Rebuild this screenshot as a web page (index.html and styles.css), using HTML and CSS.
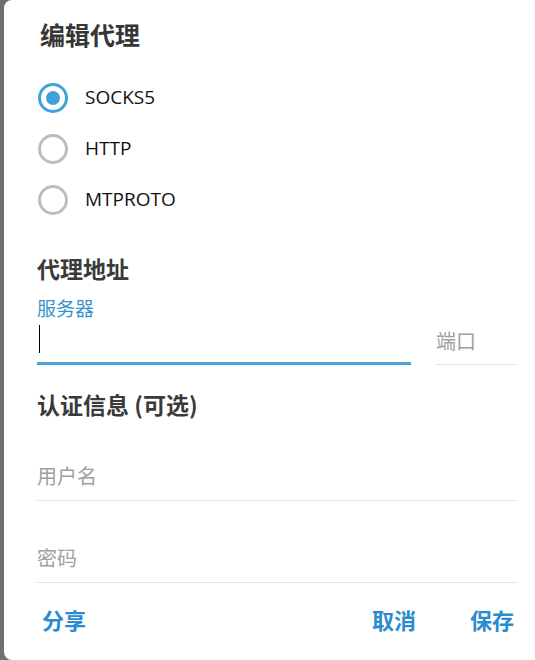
FILE: index.html
```html
<!DOCTYPE html>
<html lang="zh-CN">
<head>
<meta charset="utf-8">
<title>编辑代理</title>
<link rel="stylesheet" href="styles.css">
</head>
<body>
<div class="dialog">
  <h1 class="title">编辑代理</h1>
  <div class="radios">
    <label class="radio-row"><span class="radio checked"></span><span class="radio-text">SOCKS5</span></label>
    <label class="radio-row"><span class="radio"></span><span class="radio-text">HTTP</span></label>
    <label class="radio-row"><span class="radio"></span><span class="radio-text">MTPROTO</span></label>
  </div>
  <h2 class="section section-address">代理地址</h2>
  <div class="address-row">
    <div class="server-col">
      <div class="float-label">服务器</div>
      <div class="server-input"><span class="caret"></span></div>
    </div>
    <div class="port-input">端口</div>
  </div>
  <h2 class="section section-auth">认证信息 (可选)</h2>
  <div class="field field-user">用户名</div>
  <div class="field field-pass">密码</div>
  <div class="actions">
    <span class="btn btn-share">分享</span>
    <span class="spacer"></span>
    <span class="btn btn-cancel">取消</span>
    <span class="btn btn-save">保存</span>
  </div>
</div>
</body>
</html>
```
FILE: styles.css
```css
html, body {
  margin: 0;
  padding: 0;
  height: 660px;
  overflow: hidden;
  background: #6f6f6f;
}

body {
  font-family: "Open Sans", "Noto Sans CJK SC", sans-serif;
}

.dialog {
  margin-left: 4px;
  height: 660px;
  box-sizing: border-box;
  background: #ffffff;
  border-radius: 8px 0 0 8px;
  padding: 0 18px 0 33px;
  display: flex;
  flex-direction: column;
}

.title {
  margin: 18px 0 0 3px;
  font-family: "Noto Sans CJK SC", sans-serif;
  font-size: 25px;
  line-height: 32px;
  font-weight: 700;
  color: #363636;
}

.radios {
  margin-top: 22px;
  display: flex;
  flex-direction: column;
}

.radio-row {
  height: 51px;
  display: flex;
  align-items: center;
}

.radio {
  width: 30px;
  height: 30px;
  box-sizing: border-box;
  border: 3px solid #bdbdbd;
  border-radius: 50%;
  margin-left: 1px;
  display: flex;
  align-items: center;
  justify-content: center;
}

.radio.checked {
  border-color: #40a2dd;
}

.radio.checked::after {
  content: "";
  width: 14px;
  height: 14px;
  border-radius: 50%;
  background: #40a2dd;
}

.radio-text {
  margin-left: 17px;
  font-size: 19px;
  line-height: 24px;
  margin-top: -2px;
  color: #111;
}

.section {
  margin: 0;
  font-family: "Noto Sans CJK SC", sans-serif;
  font-size: 23px;
  line-height: 28px;
  font-weight: 700;
  color: #3a3a3a;
}

.section-address {
  margin-top: 29px;
}

.section-auth {
  margin-top: 25px;
}

.address-row {
  margin-top: 13px;
  display: flex;
  align-items: flex-end;
  gap: 25px;
}

.server-col {
  width: 374px;
  display: flex;
  flex-direction: column;
}

.float-label {
  font-family: "Noto Sans CJK SC", sans-serif;
  font-size: 19px;
  line-height: 25px;
  color: #3893cc;
}

.server-input {
  height: 45px;
  box-sizing: border-box;
  border-bottom: 3px solid #47a4d6;
  padding: 5px 0 0 2px;
}

.caret {
  display: block;
  width: 1px;
  height: 28px;
  background: #000;
}

.port-input {
  flex: 1;
  height: 45px;
  box-sizing: border-box;
  border-bottom: 1px solid #e2e2e2;
  padding: 2px 0 5px 0;
  display: flex;
  align-items: center;
  font-family: "Noto Sans CJK SC", sans-serif;
  font-size: 20px;
  color: #a0a0a0;
}

.field {
  height: 50px;
  box-sizing: border-box;
  border-bottom: 1px solid #e2e2e2;
  display: flex;
  align-items: center;
  font-family: "Noto Sans CJK SC", sans-serif;
  font-size: 20px;
  color: #a0a0a0;
}

.field-user {
  margin-top: 33px;
}

.field-pass {
  margin-top: 32px;
}

.actions {
  margin-top: 22px;
  display: flex;
  align-items: center;
}

.btn {
  font-family: "Noto Sans CJK SC", sans-serif;
  font-size: 22px;
  line-height: 28px;
  font-weight: 700;
  color: #2b8bd0;
}

.btn-share {
  margin-left: 5px;
}

.spacer {
  flex: 1;
}

.btn-cancel {
  margin-right: 54px;
}

.btn-save {
  margin-right: 3px;
}
```
